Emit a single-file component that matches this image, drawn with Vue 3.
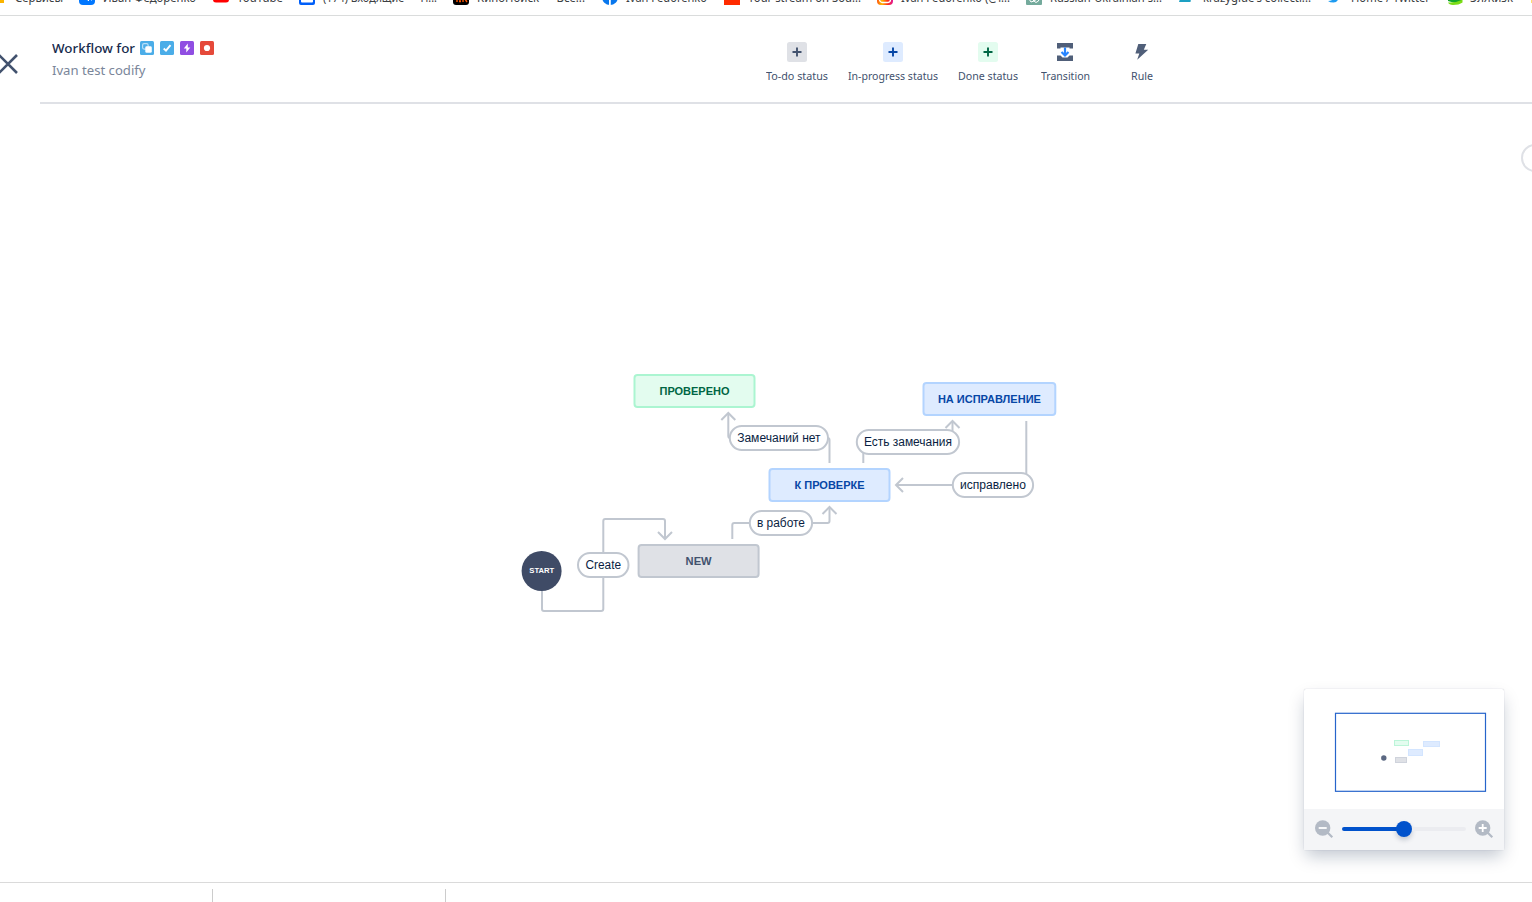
<script setup>
const bookmarks = [
  { icon: 'apps', x: -12, tx: 15, w: 48, text: 'Сервисы' },
  { icon: 'vk', x: 79, tx: 103, w: 93, text: 'Иван Федоренко' },
  { icon: 'youtube', x: 213, tx: 237, w: 46, text: 'YouTube' },
  { icon: 'mail', x: 299, tx: 323, w: 114, text: '(174) Входящие — П...' },
  { icon: 'kino', x: 453, tx: 477, w: 108, text: 'КиноПоиск — Все...' },
  { icon: 'facebook', x: 602, tx: 626, w: 81, text: 'Ivan Fedorenko' },
  { icon: 'cloud', x: 724, tx: 748, w: 113, text: 'Your stream on Sou...' },
  { icon: 'insta', x: 877, tx: 901, w: 109, text: 'Ivan Fedorenko (@i...' },
  { icon: 'gpt', x: 1026, tx: 1050, w: 112, text: 'Russian-Ukrainian s...' },
  { icon: 'band', x: 1177, tx: 1203, w: 108, text: "krazyglue's collecti..." },
  { icon: 'twitter', x: 1326, tx: 1351, w: 79, text: 'Home / Twitter' },
  { icon: 'school', x: 1447, tx: 1470, w: 43, text: 'ЭлЖизк' },
]

const nodes = [
  { x: 634.5, y: 375, w: 120, kind: 'done', text: 'ПРОВЕРЕНО', tw: 70 },
  { x: 923.5, y: 383, w: 131.8, kind: 'progress', text: 'НА ИСПРАВЛЕНИЕ', tw: 103 },
  { x: 769.5, y: 469, w: 120, kind: 'progress', text: 'К ПРОВЕРКЕ', tw: 70 },
  { x: 638.6, y: 545, w: 120, kind: 'todo', text: 'NEW', tw: 26 },
]

const edges = [
  'M542 590V609Q542 611 544 611H601Q603.3 611 603.3 609V521Q603.3 519 605.3 519H663Q665 519 665 521V539',
  'M732.3 539V525Q732.3 523 734.3 523H827.5Q829.5 523 829.5 521V507',
  'M829.5 463V440Q829.5 438 827.5 438H730.3Q728.3 438 728.3 436V413',
  'M863.3 463V443Q863.3 441.5 865.3 441.5H950.5Q952.5 441.5 952.5 439.5V421',
  'M1026.3 421V483Q1026.3 485 1024.3 485H896',
]
const arrows = [
  'M658 532L665 539L672 532',
  'M822.5 514L829.5 507L836.5 514',
  'M721.3 420L728.3 413L735.3 420',
  'M945.5 428L952.5 421L959.5 428',
  'M903 478L896 485L903 492',
]
const labels = [
  { x: 578, y: 553, w: 50.5, text: 'Create', tw: 35.5 },
  { x: 749.8, y: 511, w: 62.3, text: 'в работе', tw: 48 },
  { x: 729.8, y: 426, w: 98.2, text: 'Замечаний нет', tw: 83.5 },
  { x: 856.8, y: 430, w: 102.3, text: 'Есть замечания', tw: 88 },
  { x: 952.8, y: 473, w: 80.3, text: 'исправлено', tw: 66 },
]
const tools = [
  { kind: 'todo', text: 'To-do status', w: 62 },
  { kind: 'progress', text: 'In-progress status', w: 90 },
  { kind: 'done', text: 'Done status', w: 60 },
  { kind: 'transition', text: 'Transition', w: 49 },
  { kind: 'rule', text: 'Rule', w: 22 },
]
</script>

<template>
  <div class="page">
    <div class="bookmarks">
      <svg width="1532" height="15">
        <g v-for="b in bookmarks" :key="b.x">
          <g :transform="`translate(${b.x} -11)`">
            <rect v-if="b.icon === 'apps'" x="12" y="9" width="4" height="5" fill="#fbb400" />
            <template v-else-if="b.icon === 'vk'">
              <rect width="16" height="16" rx="4" fill="#07f" />
              <path d="M7 8L9 11.500M9 11.500H10M11 9L12.500 11.500" stroke="#fff" fill="none" />
            </template>
            <rect v-else-if="b.icon === 'youtube'" y="3" width="16" height="10.500" rx="3" fill="#f00" />
            <template v-else-if="b.icon === 'mail'">
              <rect width="16" height="16" rx="2" fill="#005ff9" />
              <rect x="2" y="3" width="12" height="10.500" rx="1" fill="#fff" />
            </template>
            <template v-else-if="b.icon === 'kino'">
              <rect width="16" height="16" rx="3" fill="#000" />
              <path d="M4 6V13M7 9V13M6 12.500H8M10 9V13M12 10L14 13" stroke="#f50" fill="none" stroke-width="1.400" />
            </template>
            <template v-else-if="b.icon === 'facebook'">
              <circle cx="8" cy="8" r="8" fill="#0877ed" />
              <path d="M7 8H8.800V16H7Z" fill="#fff" />
            </template>
            <rect v-else-if="b.icon === 'cloud'" width="16" height="16" fill="#ff2b00" />
            <template v-else-if="b.icon === 'insta'">
              <defs>
                <linearGradient id="ig"><stop offset="0" stop-color="#f51" /><stop offset=".3" stop-color="#fb0" /><stop offset=".65" stop-color="#f31" /><stop offset="1" stop-color="#e0189c" /></linearGradient>
              </defs>
              <rect width="16" height="16" rx="4" fill="url(#ig)" />
              <rect x="2.500" y="2.500" width="11" height="11" rx="3" fill="none" stroke="#fff" stroke-width="1.300" />
            </template>
            <template v-else-if="b.icon === 'gpt'">
              <rect width="16" height="16" rx="1" fill="#74aa9c" />
              <path d="M3 10L5 13L8 12L10 13.500L12.500 12L13 9M6 10L8 12L11 10" fill="none" stroke="#fff" />
            </template>
            <path v-else-if="b.icon === 'band'" d="M5 3H15L13.500 13H2Z" fill="#1da0c3" />
            <path v-else-if="b.icon === 'twitter'" d="M2 12Q5 12 7 10.500L4 8L14 4Q13 13.500 7.500 13.500Q4 13.500 2 12Z" fill="#1d9bf0" />
            <template v-else>
              <path d="M1 5H15V12L8 14L1 12Z" fill="#11a52b" />
              <path d="M1 13.500Q9 14 15.500 10.500V13.500Q12 16 6 16Q2 15.500 1 13.500Z" fill="#7bdc15" />
            </template>
          </g>
          <text class="bm" :x="b.tx" y="1.500" :textLength="b.w" lengthAdjust="spacingAndGlyphs">{{ b.text }}</text>
        </g>
        <rect x="1531" y="0" width="1" height="3" fill="#ffdf70" />
      </svg>
    </div>

    <header class="header">
      <svg class="close" width="20" height="24" viewBox="0 0 20 24">
        <path d="M-1 3L17 21M17 3L-1 21" stroke="#42526e" stroke-width="2.600" fill="none" />
      </svg>
      <div class="bar">
        <div class="titles">
          <div class="title-row">
            <svg class="title" width="84" height="20"><text class="t1" x="0" y="15" textLength="83" lengthAdjust="spacingAndGlyphs">Workflow for</text></svg>
            <div class="types">
              <svg width="14" height="14"><rect width="14" height="14" rx="1.500" fill="#4bade8" /><rect x="2.600" y="2.600" width="5.500" height="5.500" rx="1.500" fill="none" stroke="#b9e0f8" stroke-width="1.200" /><rect x="5.300" y="5.300" width="6.500" height="6.500" rx="1.400" fill="#fff" /></svg>
              <svg width="14" height="14"><rect width="14" height="14" rx="1.500" fill="#4bade8" /><path d="M3.700 7.500L6 9.700L10.500 4.200" fill="none" stroke="#fff" stroke-width="1.900" /></svg>
              <svg width="14" height="14"><rect width="14" height="14" rx="1.500" fill="#904ee2" /><path d="M7.800 2.500L3.800 7.500H6.300V11.500L10.300 6.500H7.800Z" fill="#fff" /></svg>
              <svg width="14" height="14"><rect width="14" height="14" rx="1.500" fill="#e5493a" /><circle cx="7" cy="7" r="3.100" fill="#fff" /></svg>
            </div>
          </div>
          <svg width="96" height="20"><text class="t2" x="0" y="15" textLength="93.500" lengthAdjust="spacingAndGlyphs">Ivan test codify</text></svg>
        </div>
        <div class="tools">
          <div v-for="t in tools" :key="t.kind" class="tool" :class="t.kind">
            <svg class="icon" width="24" height="20" viewBox="0 0 24 20">
              <template v-if="t.kind === 'transition'">
                <path d="M4 1H20V6.500H16.500V5.500H7.500V6.500H4ZM4 19H20V13.500H16.500L14.500 15.500H9.500L7.500 13.500H4Z" fill="#505f79" />
                <path d="M12 5.500V12.500M8.500 10L12 13.500L15.500 10" fill="none" stroke="#2684ff" stroke-width="2.200" />
              </template>
              <path v-else-if="t.kind === 'rule'" d="M8.300 2H16.300L13.800 7.700H18.200L7.200 17.700L9.300 11.400H5.400Z" fill="#505f79" />
              <template v-else>
                <rect class="chip" x="2" width="20" height="20" rx="2.500" />
                <path class="plus" d="M12 5.500V14.500M7.500 10H16.500" stroke-width="1.900" />
              </template>
            </svg>
            <svg :width="t.w" height="16"><text class="tl" x="0" y="12" :textLength="t.w" lengthAdjust="spacingAndGlyphs">{{ t.text }}</text></svg>
          </div>
        </div>
      </div>
    </header>

    <main class="canvas">
      <svg class="graph" width="1532" height="778" viewBox="0 104 1532 778">
        <circle cx="1535" cy="158" r="13" fill="#fff" stroke="#dfe1e6" stroke-width="2" />
        <path v-for="e in edges" :key="e" class="edge" :d="e" />
        <path v-for="a in arrows" :key="a" class="edge" :d="a" />
        <circle cx="541.600" cy="571" r="20" fill="#3f4b66" />
        <text class="start" x="529.300" y="573" textLength="25" lengthAdjust="spacingAndGlyphs">START</text>
        <g v-for="n in nodes" :key="n.text" class="node" :class="n.kind">
          <rect :x="n.x" :y="n.y" :width="n.w" height="32" rx="3" />
          <text :x="n.x + (n.w - n.tw) / 2" :y="n.y + 20" :textLength="n.tw" lengthAdjust="spacingAndGlyphs">{{ n.text }}</text>
        </g>
        <g v-for="l in labels" :key="l.text" class="label">
          <rect :x="l.x" :y="l.y" :width="l.w" height="24" rx="12" />
          <text :x="l.x + (l.w - l.tw) / 2" :y="l.y + 16" :textLength="l.tw" lengthAdjust="spacingAndGlyphs">{{ l.text }}</text>
        </g>
      </svg>

      <aside class="minimap">
        <svg class="map" width="200" height="120" viewBox="1304 689 200 120">
          <rect x="1335.500" y="713.300" width="150" height="78" fill="#fff" stroke="#2664cb" stroke-width="1.200" />
          <rect x="1394.500" y="740.500" width="14" height="5" fill="#e3fcef" stroke="#bcf5d9" />
          <rect x="1423.500" y="741.500" width="16" height="5" fill="#deebff" stroke="#d3e5ff" />
          <rect x="1408.500" y="749.500" width="14" height="6" fill="#deebff" stroke="#d3e5ff" />
          <rect x="1395.500" y="757.500" width="11" height="5" fill="#dfe1e6" stroke="#cfd3dc" />
          <circle cx="1383.800" cy="758" r="2.700" fill="#5b6882" />
        </svg>
        <div class="zoombar">
          <svg width="20" height="20"><circle cx="8.700" cy="8" r="7.700" fill="#b3bac5" /><path d="M13.500 12.500L18.300 17.300" stroke="#b3bac5" stroke-width="2.200" /><path d="M4.700 8H12.700" stroke="#fff" stroke-width="1.800" /></svg>
          <div class="track"><div class="fill"></div><div class="knob"></div><div class="rest"></div></div>
          <svg width="20" height="20"><circle cx="8.700" cy="8" r="7.700" fill="#b3bac5" /><path d="M13.500 12.500L18.300 17.300" stroke="#b3bac5" stroke-width="2.200" /><path d="M4.700 8H12.700M8.700 4V12" stroke="#fff" stroke-width="1.800" /></svg>
        </div>
      </aside>
    </main>

    <footer class="downloads"><i></i><i></i></footer>
  </div>
</template>

<style>
html, body { overflow: hidden; }
</style>

<style scoped>
.page { width: 1532px; height: 902px; background: #fff; overflow: hidden; display: flex; flex-direction: column; font-family: "Noto Sans", sans-serif; }
svg { display: block; flex: none; }
.bookmarks { height: 15px; border-bottom: 1px solid #dadcdc; overflow: hidden; }
.bm { font: 12px "Noto Sans", sans-serif; fill: #3c4043; }
.header { height: 88px; display: flex; }
.close { margin: 36px 20px 0 0; }
.bar { flex: 1; height: 86px; border-bottom: 2px solid #dfe1e6; display: flex; box-sizing: content-box; }
.titles { padding: 22px 0 0 12px; width: 702px; display: flex; flex-direction: column; gap: 2px; }
.title-row { display: flex; gap: 4px; align-items: center; }
.types { display: flex; gap: 6px; }
.t1 { font: 500 13px "Noto Sans", sans-serif; fill: #172b4d; }
.t2 { font: 13px "Noto Sans", sans-serif; fill: #7a869a; }
.tools { display: flex; gap: 20px; padding-top: 26px; margin-left: 12px; }
.tool { display: flex; flex-direction: column; align-items: center; gap: 6px; }
.tool.transition { margin-left: 2.5px; }
.tool.rule { margin-left: 20.5px; }
.tl { font: 11px "Noto Sans", sans-serif; fill: #42526e; }
.todo .chip { fill: #dfe1e6; }
.todo .plus { stroke: #42526e; }
.progress .chip { fill: #deebff; }
.progress .plus { stroke: #0747a6; }
.done .chip { fill: #e3fcef; }
.done .plus { stroke: #064; }
.canvas { height: 778px; position: relative; }
.edge { fill: none; stroke: #c1c7d0; stroke-width: 2; }
.start { font: bold 8px "Liberation Sans", Arial, sans-serif; fill: #fff; }
.node rect { stroke-width: 2; }
.node text { font: bold 11px "Liberation Sans", Arial, sans-serif; }
.node.todo rect { fill: #dfe1e6; stroke: #c1c7d0; }
.node.todo text { fill: #42526e; }
.node.progress rect { fill: #deebff; stroke: #b3d4ff; }
.node.progress text { fill: #0747a6; }
.node.done rect { fill: #e3fcef; stroke: #abf5d1; }
.node.done text { fill: #064; }
.label rect { fill: #fff; stroke: #c1c7d0; stroke-width: 2; }
.label text { font: 12px "Liberation Sans", Arial, sans-serif; fill: #091e42; }
.minimap { position: absolute; left: 1304px; top: 585px; width: 200px; height: 161px; background: #fff; border-radius: 2px; box-shadow: 0 0 1px rgba(9,30,66,.31), 0 8px 16px -2px rgba(9,30,66,.25); }
.zoombar { height: 41px; background: #f4f5f7; display: flex; align-items: center; justify-content: space-between; padding: 0 10px; box-sizing: border-box; }
.track { width: 124px; display: flex; align-items: center; margin: 0 7px 1px; }
.fill { width: 56px; height: 4px; background: #0052cc; border-radius: 2px 0 0 2px; margin-right: -2px; }
.knob { width: 16px; height: 16px; border-radius: 50%; background: #0052cc; box-shadow: 0 3px 5px rgba(9,30,66,.2); }
.rest { flex: 1; height: 4px; background: #ebecf0; border-radius: 0 2px 2px 0; }
.downloads { height: 20px; border-top: 1px solid #dadada; display: flex; padding-top: 6px; box-sizing: border-box; }
.downloads i { width: 212px; height: 14px; border-right: 1px solid #ccc; }
.downloads i + i { width: 232px; }
</style>
